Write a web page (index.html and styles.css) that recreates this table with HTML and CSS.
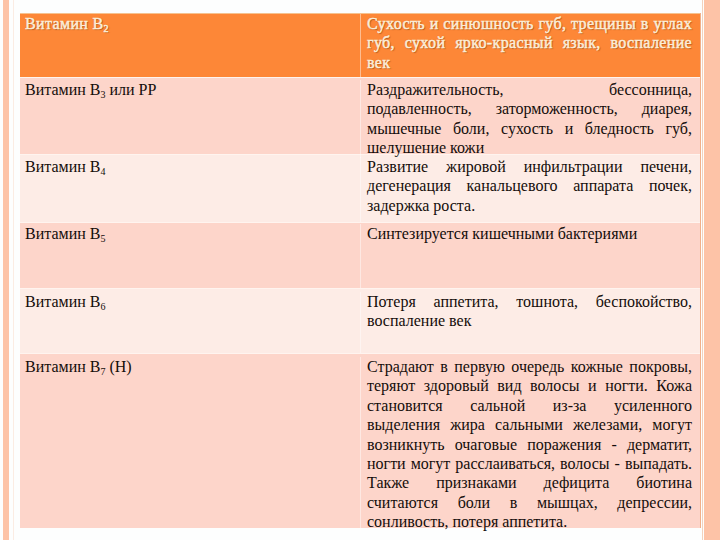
FILE: index.html
```html
<!DOCTYPE html>
<html lang="ru">
<head>
<meta charset="utf-8">
<title>Витамины группы B</title>
<link rel="stylesheet" href="styles.css">
</head>
<body>
<div class="slide">
  <div class="band-left"></div>
  <div class="rule-left"></div>
  <main class="content">
    <div class="vtable">
      <div class="row head">
        <div class="cell name">Витамин В<sub>2</sub></div>
        <div class="cell desc">Сухость и синюшность губ, трещины в углах губ, сухой ярко-красный язык, воспаление век</div>
      </div>
      <div class="row pink r2">
        <div class="cell name">Витамин В<sub>3</sub> или РР</div>
        <div class="cell desc">Раздражительность, бессонница, подавленность, заторможенность, диарея, мышечные боли, сухость и бледность губ, шелушение кожи</div>
      </div>
      <div class="row light r3">
        <div class="cell name">Витамин В<sub>4</sub></div>
        <div class="cell desc">Развитие жировой инфильтрации печени, дегенерация канальцевого аппарата почек, задержка роста.</div>
      </div>
      <div class="row pink r4">
        <div class="cell name">Витамин В<sub>5</sub></div>
        <div class="cell desc">Синтезируется кишечными бактериями</div>
      </div>
      <div class="row light r5">
        <div class="cell name">Витамин В<sub>6</sub></div>
        <div class="cell desc">Потеря аппетита, тошнота, беспокойство, воспаление век</div>
      </div>
      <div class="row pink r6">
        <div class="cell name">Витамин В<sub>7</sub> (Н)</div>
        <div class="cell desc">Страдают в первую очередь кожные покровы, теряют здоровый вид волосы и ногти. Кожа становится сальной из-за усиленного выделения жира сальными железами, могут возникнуть очаговые поражения - дерматит, ногти могут расслаиваться, волосы - выпадать. Также признаками дефицита биотина считаются боли в мышцах, депрессии, сонливость, потеря аппетита.</div>
      </div>
    </div>
  </main>
  <div class="rule-right"></div>
  <div class="band-right"></div>
</div>
</body>
</html>
```

FILE: styles.css
```css
* { box-sizing: border-box; }

html, body {
  margin: 0;
  padding: 0;
  background: #ffffff;
}

.slide {
  display: flex;
  width: 720px;
  height: 540px;
  background: #fdfefe;
  overflow: hidden;
  font-family: "Liberation Serif", "Times New Roman", serif;
  font-size: 16px;
  line-height: 19.4px;
  color: #140d0a;
}

.band-left {
  margin-left: 3px;
  width: 6px;
  background: #fdc3a7;
}

.rule-left {
  margin-left: 4px;
  width: 1px;
  background: #fbece3;
}

.content {
  margin-left: 6px;
  padding-top: 13px;
  width: 681px;
  flex: none;
}

.vtable {
  width: 681px;
  border-right: 1px solid #f1b08a;
}

.row {
  display: grid;
  grid-template-columns: 340px 340px;
  border-top: 1px solid #fff4ef;
}

.name {
  padding-left: 5px;
}

.desc {
  padding-left: 6px;
  padding-right: 8px;
  text-align: justify;
  border-left: 1px solid rgba(255, 255, 255, 0.45);
}

sub {
  font-size: 10px;
  line-height: 0;
  vertical-align: -3px;
}

.head {
  height: 64px;
  background: #fd8737;
  border-top: 1px solid #f6c28f;
  color: #fdeed8;
  font-weight: normal;
  letter-spacing: 0.35px;
  -webkit-text-stroke: 0.5px #fdeed8;
  text-shadow: 1px 1px 1px rgba(150, 70, 20, 0.75), 0 0 1px rgba(150, 70, 20, 0.6);
}

.pink { background: #fdd5ca; }
.light { background: #fdece6; }

.r2 { height: 77px; padding-top: 2px; }
.r3 { height: 68px; padding-top: 2px; }
.r4 { height: 66px; padding-top: 1px; }
.r5 { height: 65px; padding-top: 3px; }
.r6 { height: 175px; padding-top: 3px; }

.rule-right {
  margin-left: 1px;
  width: 1px;
  background: #f3d2bd;
  flex: none;
}

.band-right {
  margin-left: 1px;
  flex: 1;
  background: #fdc3a7;
}
```
